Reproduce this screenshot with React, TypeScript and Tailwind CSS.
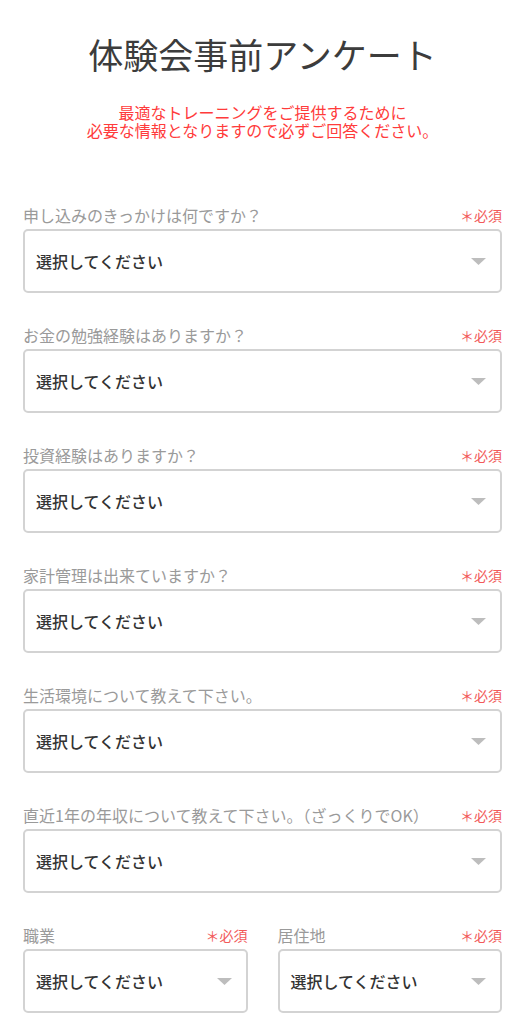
import React from "react";

const FONT = { fontFamily: '"Noto Sans CJK JP", "Noto Sans", sans-serif' };

function Select() {
  return (
    <div className="flex h-[64px] items-center justify-between rounded-[5px] border-2 border-[#d3d3d3] bg-white pl-[11px] pr-[14px]">
      <span className="text-[16px] font-medium leading-[20px] text-[#333333]">選択してください</span>
      <svg width="15" height="7" viewBox="0 0 15 7" className="shrink-0">
        <polygon points="0,0 15,0 7.5,7" fill="#bdbdbd" />
      </svg>
    </div>
  );
}

function Field({ label }: { label: string }) {
  return (
    <div>
      <div className="mb-[4px] flex items-center justify-between leading-[20px]">
        <span className="whitespace-nowrap text-[16px] text-[#9a9a9a]">{label}</span>
        <span className="whitespace-nowrap text-[14px] text-[#f25a5a]">＊必須</span>
      </div>
      <Select />
    </div>
  );
}

export default function App() {
  const fields = [
    "申し込みのきっかけは何ですか？",
    "お金の勉強経験はありますか？",
    "投資経験はありますか？",
    "家計管理は出来ていますか？",
    "生活環境について教えて下さい。",
    "直近1年の年収について教えて下さい。（ざっくりでOK）",
  ];
  return (
    <div style={FONT} className="w-full bg-white px-[23px] pb-[20px]">
      <h1 className="pt-[36px] text-center text-[35px] font-normal leading-[35px] text-[#3c3c3c]">
        体験会事前アンケート
      </h1>
      <p className="mt-[32px] text-center text-[16px] leading-[18px] text-[#ff3b3b]">
        最適なトレーニングをご提供するために
        <br />
        必要な情報となりますので必ずご回答ください。
      </p>
      <div className="mt-[66px] flex flex-col gap-[32px]">
        {fields.map((f) => (
          <Field key={f} label={f} />
        ))}
        <div className="grid grid-cols-2 gap-[30px]">
          <Field label="職業" />
          <Field label="居住地" />
        </div>
      </div>
    </div>
  );
}
